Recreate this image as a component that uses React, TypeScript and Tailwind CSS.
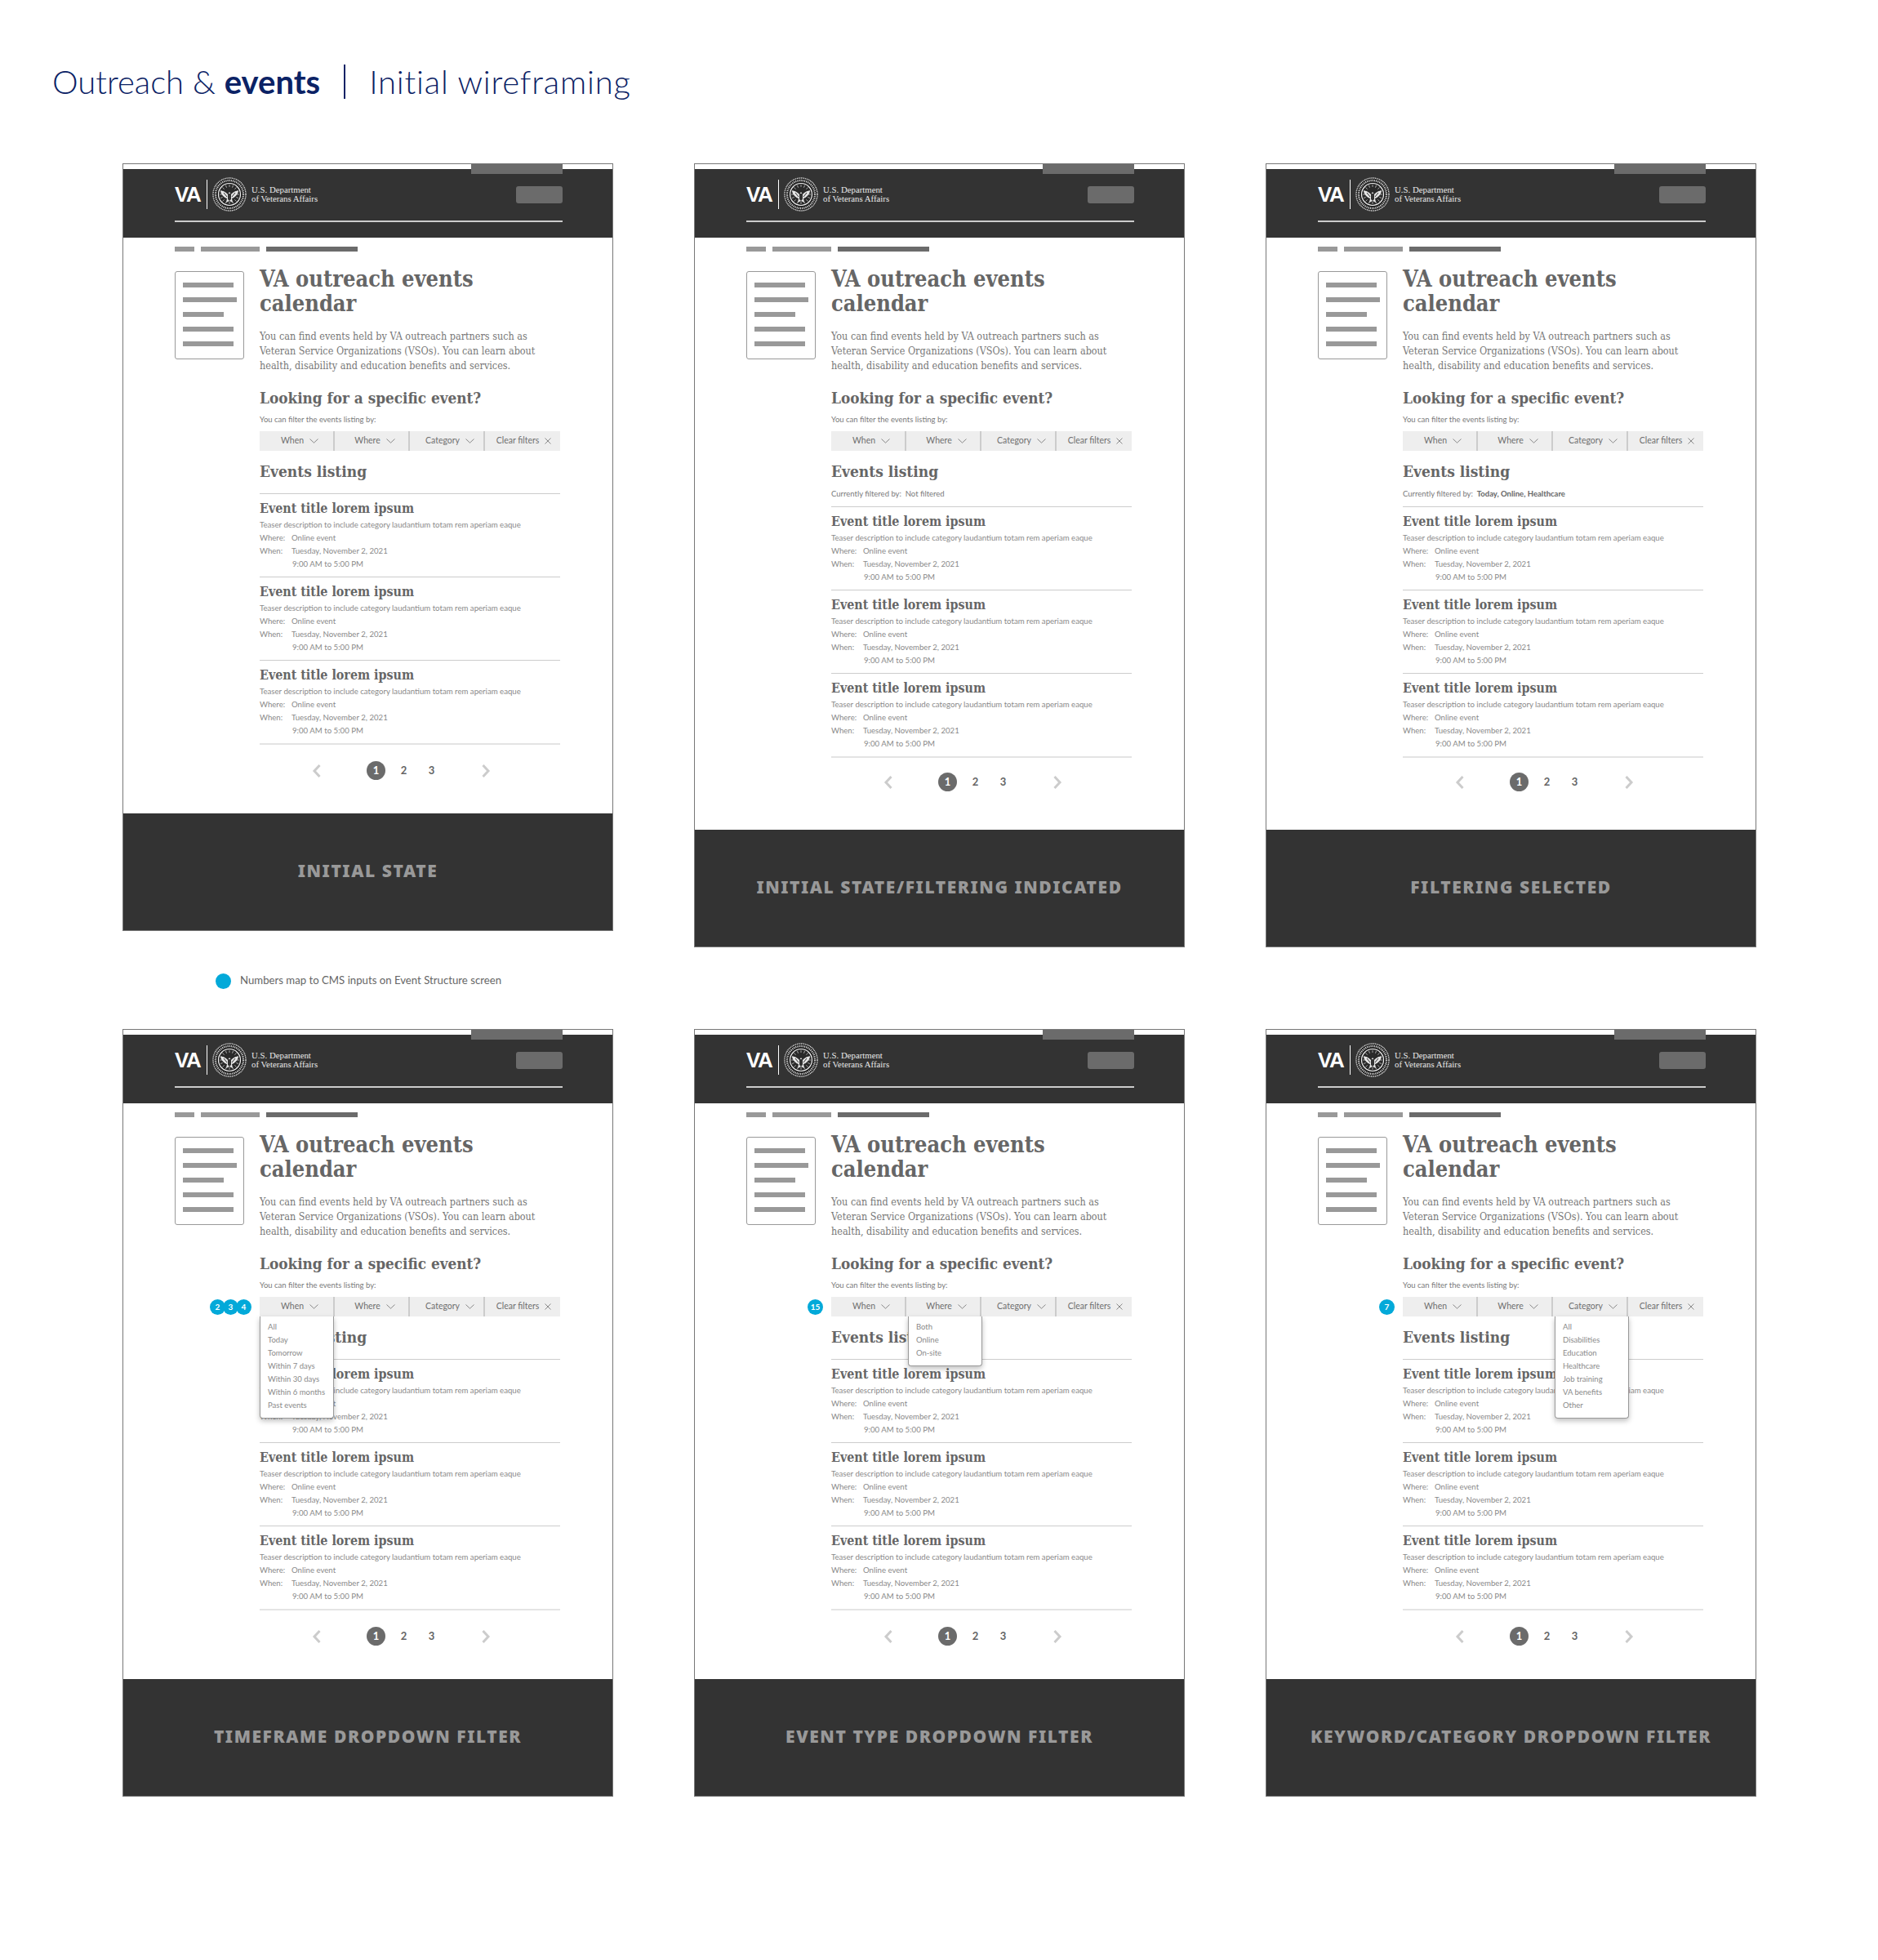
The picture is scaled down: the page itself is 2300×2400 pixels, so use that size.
const SANS = "font-['Lato','Noto_Sans',sans-serif]";
const SLAB = "font-['DejaVu_Serif_Condensed','DejaVu_Serif',serif]";

const SEAL_RAYS = Array.from({ length: 16 }, (_, i) => i * 22.5);

function Seal() {
  return (
    <svg width="42" height="42" viewBox="0 0 42 42" className="shrink-0">
      <circle cx="21" cy="21" r="20" fill="#1c1c1c" stroke="#e8e8e8" strokeWidth="1.4" strokeDasharray="1 0.7" />
      <circle cx="21" cy="21" r="17" fill="none" stroke="#cfcfcf" strokeWidth="2.4" strokeDasharray="1.2 1" />
      <circle cx="21" cy="21" r="13.5" fill="#2a2a2a" stroke="#f2f2f2" strokeWidth="1.2" />
      {SEAL_RAYS.map((a) => (
        <line key={a} x1="21" y1="9" x2="21" y2="12" stroke="#bbb" strokeWidth="0.8" transform={`rotate(${a} 21 21)`} />
      ))}
      <path d="M10 17 C13 16 16 18 19 21 L21 18 L23 21 C26 18 29 16 32 17 C31 22 27 25 24 26 L25 31 L21 29 L17 31 L18 26 C15 25 11 22 10 17 Z" fill="#e6e6e6" />
      <path d="M19 20 H23 V27 L21 29 L19 27 Z" fill="#333" />
      <path d="M14 19 L18 24 M28 19 L24 24" stroke="#333" strokeWidth="1" />
    </svg>
  );
}

function Chevron() {
  return (
    <svg width="11" height="6" viewBox="0 0 11 6" className="shrink-0">
      <path d="M0.5 0.5 L5.5 5.2 L10.5 0.5" fill="none" stroke="#6f6f6f" strokeWidth="0.8" />
    </svg>
  );
}

function Cross() {
  return (
    <svg width="8" height="8" viewBox="0 0 8 8" className="shrink-0">
      <path d="M0.5 0.5 L7.5 7.5 M7.5 0.5 L0.5 7.5" fill="none" stroke="#6f6f6f" strokeWidth="0.8" />
    </svg>
  );
}

function Header() {
  return (
    <div className="relative bg-[#333333] mt-[6px] pl-[63px] pr-[61px] pt-[10px] pb-[19px]">
      <div className="absolute right-[61px] -top-[6px] w-[112px] h-[12px] bg-[#6b6b6b]" />
      <div className="flex items-center h-[42px]">
        <span className="font-['Liberation_Sans',sans-serif] font-bold text-white text-[26px] leading-none tracking-[-1.5px] w-[33px]">VA</span>
        <div className="w-px h-[36px] bg-white mx-[6px]" />
        <Seal />
        <div className="ml-[6px] font-['Liberation_Serif',serif] text-[#e8e8e8] text-[10.8px] leading-[11px]">
          <div>U.S. Department</div>
          <div>of Veterans Affairs</div>
        </div>
        <div className="ml-auto w-[57px] h-[21px] rounded-[3px] bg-[#6b6b6b]" />
      </div>
      <div className="mt-[11px] h-[2px] bg-[#cccccc]" />
    </div>
  );
}

function DocIcon() {
  return (
    <div className="w-[85px] h-[108px] mt-[5px] shrink-0 border border-[#999999] rounded-[3px] pl-[9px] pt-[13px] flex flex-col gap-[12px]">
      <div className="w-[62px] h-[6px] bg-[#999999]" />
      <div className="w-[66px] h-[6px] bg-[#999999]" />
      <div className="w-[50px] h-[6px] bg-[#999999]" />
      <div className="w-[62px] h-[6px] bg-[#999999]" />
      <div className="w-[62px] h-[6px] bg-[#999999]" />
    </div>
  );
}

function Menu({ items, className }: { items: string[]; className: string }) {
  return (
    <div className={`absolute top-full w-[91px] z-10 bg-white border border-t-0 border-[#999999] rounded-b-[4px] shadow-[0_3px_6px_rgba(0,0,0,0.25)] pl-[9px] pt-[5px] pb-[7px] ${className}`}>
      {items.map((it) => (
        <div key={it} className="text-[9.5px] leading-[16px] text-[#8a8a8a] whitespace-nowrap">{it}</div>
      ))}
    </div>
  );
}

const FILTERS = ["When", "Where", "Category"];

function FilterBar({ open, items, badges }: { open?: number; items?: string[]; badges?: string[] }) {
  return (
    <div className="relative flex h-[24px] mt-[7px] bg-[#eeeeee] text-[#6f6f6f] text-[10.5px]">
      {badges && (
        <div className="absolute right-full top-[3px] mr-[10px] flex">
          {badges.map((b) => (
            <span key={b} className="w-[19px] h-[19px] -ml-[3px] rounded-full bg-[#03a9d9] text-white text-[10px] font-bold flex items-center justify-center">{b}</span>
          ))}
        </div>
      )}
      {FILTERS.map((f, i) => (
        <div key={f} className="relative w-[92px] border-r-2 border-[#cccccc] flex items-center justify-center gap-[7px] pl-[8px]">
          {f}
          <Chevron />
          {open === i && items && <Menu items={items} className={i === 0 ? "left-0" : "left-[2px]"} />}
        </div>
      ))}
      <div className="flex-1 flex items-center justify-center gap-[7px] pl-[3px] whitespace-nowrap">
        Clear filters
        <Cross />
      </div>
    </div>
  );
}

function EventItem() {
  return (
    <div className="border-t border-[#cccccc] pt-[8px] pb-[8px] text-[9.65px] leading-[16px] text-[#8a8a8a]">
      <h3 className={`${SLAB} font-bold text-[15.9px] leading-[20px] text-[#666666] mb-px`}>Event title lorem ipsum</h3>
      <p>Teaser description to include category laudantium totam rem aperiam eaque</p>
      <div className="flex"><span className="w-[39px]">Where:</span><span>Online event</span></div>
      <div className="flex"><span className="w-[39px]">When:</span><span>Tuesday, November 2, 2021</span></div>
      <div className="pl-[40px]">9:00 AM to 5:00 PM</div>
    </div>
  );
}

function Pager({ className }: { className: string }) {
  return (
    <div className={`flex items-center pl-[64px] h-[23px] text-[13px] font-bold text-[#666666] ${className}`}>
      <svg width="12" height="18" viewBox="0 0 12 18" className="shrink-0">
        <path d="M9.5 2 L3 9 L9.5 16" fill="none" stroke="#cccccc" strokeWidth="3" />
      </svg>
      <span className="ml-[55px] w-[23px] h-[23px] rounded-full bg-[#6b6b6b] text-white flex items-center justify-center">1</span>
      <span className="ml-[11px] w-[23px] text-center">2</span>
      <span className="ml-[11px] w-[23px] text-center">3</span>
      <svg width="12" height="18" viewBox="0 0 12 18" className="ml-[49px] shrink-0">
        <path d="M2.5 2 L9 9 L2.5 16" fill="none" stroke="#cccccc" strokeWidth="3" />
      </svg>
    </div>
  );
}

type CardProps = {
  label: string;
  filtered?: string;
  filteredBold?: boolean;
  open?: number;
  items?: string[];
  badges?: string[];
};

function Card({ label, filtered, filteredBold, open, items, badges }: CardProps) {
  return (
    <div className={`${SANS} border border-[#777777] bg-white w-[601px]`}>
      <Header />
      <div className="flex gap-[8px] mt-[11px] ml-[63px]">
        <div className="w-[24px] h-[6px] bg-[#999999]" />
        <div className="w-[72px] h-[6px] bg-[#999999]" />
        <div className="w-[112px] h-[6px] bg-[#6b6b6b]" />
      </div>
      <div className="flex items-start gap-[19px] mt-[19px] ml-[63px]">
        <DocIcon />
        <div className="w-[368px]">
          <h1 className={`${SLAB} font-bold text-[27px] leading-[30px] text-[#666666]`}>VA outreach events calendar</h1>
          <p className={`${SLAB} mt-[16px] w-[345px] text-[12.5px] leading-[18px] text-[#777777]`}>
            You can find events held by VA outreach partners such as Veteran Service Organizations (VSOs). You can learn about health, disability and education benefits and services.
          </p>
          <h2 className={`${SLAB} font-bold mt-[17px] text-[18.8px] leading-[26px] text-[#666666]`}>Looking for a specific event?</h2>
          <p className="mt-[7px] text-[9.5px] leading-[14px] text-[#7a7a7a]">You can filter the events listing by:</p>
          <FilterBar open={open} items={items} badges={badges} />
          <h2 className={`${SLAB} font-bold mt-[12px] text-[19px] leading-[26px] text-[#666666]`}>Events listing</h2>
          {filtered ? (
            <p className="mt-[8px] mb-[8px] text-[9.5px] leading-[14px] text-[#7a7a7a]">
              Currently filtered by:&nbsp; <span className={filteredBold ? "font-bold text-[#666666]" : ""}>{filtered}</span>
            </p>
          ) : (
            <div className="mt-[14px]" />
          )}
          <EventItem />
          <EventItem />
          <EventItem />
          <div className="h-[2px] bg-[#e4e4e4]" />
          <Pager className={filtered ? "mt-[18px]" : "mt-[20px]"} />
        </div>
      </div>
      <div className={`${filtered ? "mt-[47px]" : "mt-[41px]"} h-[143px] bg-[#333333] flex items-center justify-center`}>
        <span className="font-['Noto_Sans',sans-serif] text-[21px] font-black tracking-[1.55px] text-[#999999] whitespace-nowrap -mt-[2px]">{label}</span>
      </div>
    </div>
  );
}

export default function App() {
  return (
    <div className={`${SANS} w-[2300px] h-[2400px] bg-white`}>
      {/* page title */}
      <div className="flex items-center h-[200px] pl-[64px] text-[#0b2265] text-[40px] font-light">
        <span>Outreach &amp; <b className="font-bold">events</b></span>
        <span className="w-[2px] h-[42px] bg-[#0b2265] ml-[29px] mr-[29px]" />
        <span className="tracking-[0.8px]">Initial wireframing</span>
      </div>

      <div className="grid grid-cols-[600px_600px_600px] gap-x-[100px] ml-[150px] items-start">
        <div>
          <Card label="INITIAL STATE" />
          <div className="flex items-center gap-[11px] mt-[51px] ml-[114px] h-[20px]">
            <span className="w-[19px] h-[19px] rounded-full bg-[#03a9d9]" />
            <span className="text-[13.2px] text-[#666666]">Numbers map to CMS inputs on Event Structure screen</span>
          </div>
        </div>
        <Card label="INITIAL STATE/FILTERING INDICATED" filtered="Not filtered" />
        <Card label="FILTERING SELECTED" filtered="Today, Online, Healthcare" filteredBold />
      </div>

      <div className="grid grid-cols-[600px_600px_600px] gap-x-[100px] ml-[150px] mt-[49px] items-start">
        <Card
          label="TIMEFRAME DROPDOWN FILTER"
          open={0}
          badges={["2", "3", "4"]}
          items={["All", "Today", "Tomorrow", "Within 7 days", "Within 30 days", "Within 6 months", "Past events"]}
        />
        <Card label="EVENT TYPE DROPDOWN FILTER" open={1} badges={["15"]} items={["Both", "Online", "On-site"]} />
        <Card
          label="KEYWORD/CATEGORY DROPDOWN FILTER"
          open={2}
          badges={["7"]}
          items={["All", "Disabilities", "Education", "Healthcare", "Job training", "VA benefits", "Other"]}
        />
      </div>
    </div>
  );
}
